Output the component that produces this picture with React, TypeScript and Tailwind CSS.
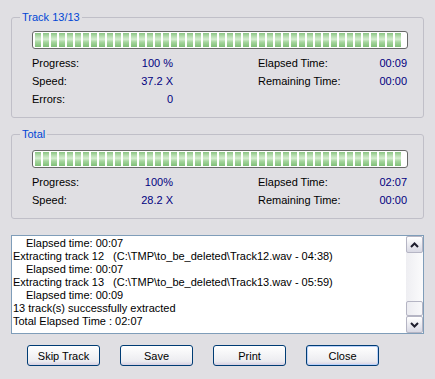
import React from "react";

const SEGMENTS = Array.from({ length: 46 });

function ProgressBar() {
  return (
    <div className="ml-[20px] flex h-[18px] w-[376px] items-center rounded-[3px] border border-[#686868] bg-white px-[2px]">
      <div className="flex h-[14px] gap-[2px] overflow-hidden">
        {SEGMENTS.map((_, i) => (
          <div
            key={i}
            className="h-full w-[6px] shrink-0 bg-[linear-gradient(to_bottom,#8ac483_0%,#b7deb0_25%,#d5eed0_45%,#a6d59e_65%,#80c078_100%)]"
          />
        ))}
      </div>
    </div>
  );
}

function Row({ label, value, label2, value2 }: { label: string; value: string; label2?: string; value2?: string }) {
  return (
    <div className="ml-[20px] flex h-[18px] items-center">
      <span className="w-[70px]">{label}</span>
      <span className="w-[71px] text-right text-[#000080]">{value}</span>
      {label2 && (
        <>
          <span className="ml-[85px] w-[100px]">{label2}</span>
          <span className="w-[49px] text-right text-[#000080]">{value2}</span>
        </>
      )}
    </div>
  );
}

function Chevron({ up }: { up?: boolean }) {
  return (
    <svg width="9" height="6" viewBox="0 0 9 6">
      <polyline
        points={up ? "1,5 4.5,1.5 8,5" : "1,1 4.5,4.5 8,1"}
        fill="none"
        stroke="#1e1e2e"
        strokeWidth="2"
      />
    </svg>
  );
}

function ScrollButton({ up }: { up?: boolean }) {
  return (
    <div className="flex h-[17px] w-[17px] items-center justify-center rounded-[2px] border border-[#b5b5c4] bg-[linear-gradient(to_bottom,#ffffff,#d9d9e4)]">
      <Chevron up={up} />
    </div>
  );
}

function XpButton({ children, isDefault }: { children: React.ReactNode; isDefault?: boolean }) {
  return (
    <button
      className={
        isDefault
          ? "h-[21px] w-[73px] rounded-[3px] border border-[#003c74] bg-[linear-gradient(to_bottom,#ffffff,#ececf0_80%,#d6d0e2)] text-black shadow-[inset_0_0_0_1px_#b9d1fa]"
          : "h-[21px] w-[73px] rounded-[3px] border border-[#003c74] bg-[linear-gradient(to_bottom,#ffffff,#ececf0_80%,#d6d0e2)] text-black"
      }
    >
      {children}
    </button>
  );
}

export default function App() {
  return (
    <div className="h-[379px] w-[435px] bg-[#e0dfe3] px-[11px] pt-[10px] font-['Liberation_Sans',sans-serif] text-[11px] leading-[14px] text-black">
      <fieldset className="rounded-[3px] border border-[#c0bfc8] pb-[9px]">
        <legend className="ml-[8px] px-[2px] text-[#0046d5]">Track 13/13</legend>
        <div className="mt-[7px]">
          <ProgressBar />
        </div>
        <div className="mt-[5px]">
          <Row label="Progress:" value="100 %" label2="Elapsed Time:" value2="00:09" />
          <Row label="Speed:" value="37.2 X" label2="Remaining Time:" value2="00:00" />
          <Row label="Errors:" value="0" />
        </div>
      </fieldset>

      <fieldset className="mt-[9px] rounded-[3px] border border-[#c0bfc8] pb-[9px]">
        <legend className="ml-[8px] px-[2px] text-[#0046d5]">Total</legend>
        <div className="mt-[9px]">
          <ProgressBar />
        </div>
        <div className="mt-[5px]">
          <Row label="Progress:" value="100%" label2="Elapsed Time:" value2="02:07" />
          <Row label="Speed:" value="28.2 X" label2="Remaining Time:" value2="00:00" />
        </div>
      </fieldset>

      <div className="mt-[16px] flex h-[99px] border border-[#7f9db9] bg-white">
        <div className="flex-1 overflow-hidden whitespace-pre pl-[1px] pt-[1px] leading-[13px]">
          <div className="pl-[13px]">Elapsed time: 00:07</div>
          <div>
            Extracting track 12<span className="ml-[9px]">(C:\TMP\to_be_deleted\Track12.wav - 04:38)</span>
          </div>
          <div className="pl-[13px]">Elapsed time: 00:07</div>
          <div>
            Extracting track 13<span className="ml-[9px]">(C:\TMP\to_be_deleted\Track13.wav - 05:59)</span>
          </div>
          <div className="pl-[13px]">Elapsed time: 00:09</div>
          <div>13 track(s) successfully extracted</div>
          <div>Total Elapsed Time : 02:07</div>
        </div>
        <div className="flex w-[17px] flex-col bg-[linear-gradient(to_right,#eeeef2,#fbfbfc)]">
          <ScrollButton up />
          <div className="flex-1" />
          <div className="h-[15px] w-[17px] rounded-[2px] border border-[#b5b5c4] bg-[linear-gradient(to_right,#ececf1,#f8f8fa)]" />
          <ScrollButton />
        </div>
      </div>

      <div className="mt-[11px] flex gap-[20px] pl-[16px]">
        <XpButton>Skip Track</XpButton>
        <XpButton>Save</XpButton>
        <XpButton>Print</XpButton>
        <XpButton isDefault>Close</XpButton>
      </div>
    </div>
  );
}
